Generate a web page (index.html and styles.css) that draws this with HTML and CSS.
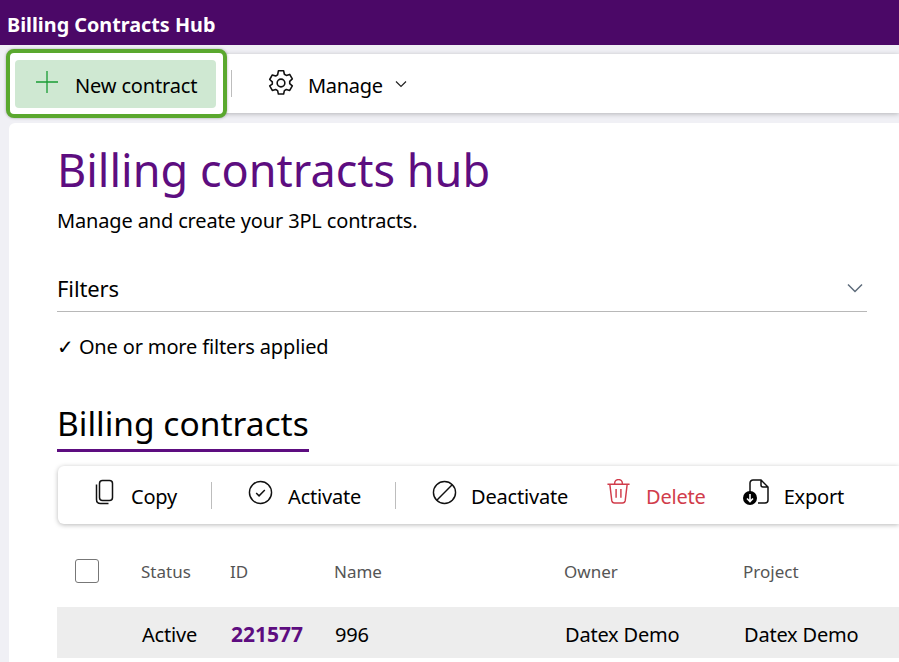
FILE: index.html
```html
<!DOCTYPE html>
<html lang="en">
<head>
<meta charset="utf-8">
<title>Billing Contracts Hub</title>
<link rel="stylesheet" href="styles.css">
</head>
<body>
<header class="topbar">Billing Contracts Hub</header>
<div class="shell">
  <nav class="toolbar">
    <div class="highlight">
      <button class="new-btn">
        <svg class="plus" width="24" height="24" viewBox="0 0 24 24"><path d="M12 1v22M1 12h22" fill="none" stroke="#1a9c34" stroke-width="1.300"/></svg>
        <span>New contract</span>
      </button>
    </div>
    <span class="sep sep-top"></span>
    <div class="manage">
      <svg class="gear" width="26" height="26" viewBox="1.500 1.500 23 23" fill="none" stroke="#111" stroke-width="1.400" stroke-linejoin="round"><path d="M10.700 2.200h4.600l.7 3.100 1.700 1 3-.9 2.300 4-2.300 2.100v2l2.300 2.100-2.300 4-3-.9-1.700 1-.7 3.100h-4.600l-.7-3.100-1.700-1-3 .9-2.300-4L5.300 14v-2L3 9.900l2.300-4 3 .9 1.700-1z"/><circle cx="13" cy="13" r="3.400"/></svg>
      <span>Manage</span>
      <svg class="caret" width="12" height="8" viewBox="0 0 12 8"><path d="M1 1.500l5 5 5-5" fill="none" stroke="#222" stroke-width="1.200"/></svg>
    </div>
  </nav>
  <main class="card">
    <h1>Billing contracts hub</h1>
    <p class="sub">Manage and create your 3PL contracts.</p>
    <div class="filters">
      <span>Filters</span>
      <svg width="16" height="10" viewBox="0 0 16 10"><path d="M1 1.500l7 7 7-7" fill="none" stroke="#5d6b7a" stroke-width="1.500"/></svg>
    </div>
    <p class="applied">✓ One or more filters applied</p>
    <h2><span>Billing contracts</span></h2>
    <div class="actions">
      <div class="act act-copy">
        <svg width="24" height="26" viewBox="0 0 24 26" fill="none" stroke="#111" stroke-width="1.500"><rect x="6.500" y="1.500" width="13" height="20" rx="3"/><path d="M3.500 5.500v15c0 2.500 1.500 4 4 4h8"/></svg>
        <span>Copy</span>
      </div>
      <span class="sep sep-a"></span>
      <div class="act act-activate">
        <svg width="25" height="25" viewBox="0 0 26 26" fill="none" stroke="#111" stroke-width="1.500"><circle cx="13" cy="13" r="11.500"/><path d="M8.500 13.500l3 3 6-6"/></svg>
        <span>Activate</span>
      </div>
      <span class="sep sep-b"></span>
      <div class="act act-deactivate">
        <svg width="25" height="25" viewBox="0 0 26 26" fill="none" stroke="#111" stroke-width="1.500"><circle cx="13" cy="13" r="11.500"/><path d="M5 21L21 5"/></svg>
        <span>Deactivate</span>
      </div>
      <div class="act act-delete">
        <svg width="25" height="26" viewBox="0 0 26 26" fill="none" stroke="#d13c4b" stroke-width="1.500"><path d="M1.500 5h23M9 5V4a4 4 0 0 1 8 0v1M4 5l2 17a3 3 0 0 0 3 2.500h8a3 3 0 0 0 3-2.500l2-17M10.500 10v9M15.500 10v9"/></svg>
        <span>Delete</span>
      </div>
      <div class="act act-export">
        <svg width="26" height="26" viewBox="0 0 26 26"><path d="M7 14V4a3 3 0 0 1 3-3h8l7 7v13a3 3 0 0 1-3 3h-7M18 1v5a2 2 0 0 0 2 2h5" fill="none" stroke="#111" stroke-width="1.500"/><circle cx="7" cy="19" r="7"/><path d="M7 15v7M4 19.500L7 22.500l3-3" fill="none" stroke="#fff" stroke-width="1.600"/></svg>
        <span>Export</span>
      </div>
    </div>
    <div class="row head">
      <span class="c-check"><span class="checkbox"></span></span>
      <span class="c-status">Status</span>
      <span class="c-id">ID</span>
      <span class="c-name">Name</span>
      <span class="c-owner">Owner</span>
      <span class="c-project">Project</span>
    </div>
    <div class="row data">
      <span class="c-check"></span>
      <span class="c-status">Active</span>
      <span class="c-id link">221577</span>
      <span class="c-name">996</span>
      <span class="c-owner">Datex Demo</span>
      <span class="c-project">Datex Demo</span>
    </div>
  </main>
</div>
</body>
</html>
```
FILE: styles.css
```css
* { box-sizing: border-box; }
html, body { margin: 0; height: 100%; }
body {
  overflow: hidden;
  background: #f0f0f5;
  color: #000;
  font-family: "Noto Sans", "Open Sans", "Liberation Sans", sans-serif;
}
.topbar {
  height: 45px;
  padding: 12px 0 0 7px;
  background: #4b0867;
  color: #fff;
  font-size: 19.800px;
  font-weight: 700;
  line-height: 25px;
}
.shell { padding: 9px 0 0 10px; }
.toolbar {
  display: flex;
  align-items: center;
  height: 59px;
  background: #fff;
  border-radius: 4px 0 0 4px;
  box-shadow: 0 1px 5px rgba(0,0,0,.25);
}
.highlight {
  flex: none;
  margin: 0 4px 0 -4px;
  height: 69px;
  width: 221px;
  padding: 7px 7px 6px 5px;
  background: #fff;
  border: 4px solid #5aa82e;
  border-radius: 8px;
  box-shadow: 0 0 3px rgba(0,0,0,.3);
}
.new-btn {
  display: flex;
  align-items: center;
  width: 201px;
  height: 48px;
  padding: 0 0 0 20px;
  border: 0;
  border-radius: 4px;
  background: #cfe8d2;
  color: #000;
  font: inherit;
  font-size: 20px;
  letter-spacing: -0.150px;
}
.plus { position: relative; top: -2px; }
.new-btn span { margin-left: 16px; position: relative; top: 1px; }
.sep {
  flex: none;
  width: 1px;
  height: 27px;
  background: #bdbdbd;
}
.manage {
  display: flex;
  align-items: center;
  margin-left: 36px;
  font-size: 20px;
  letter-spacing: -0.300px;
}
.manage .gear { position: relative; top: -1px; }
.manage span { margin-left: 14px; position: relative; top: 2px; }
.manage .caret { margin-left: 12px; }
.card {
  margin: 10px 0 0 -1px;
  padding: 17px 0 0 48px;
  height: 539px;
  background: #fff;
  border-radius: 6px 0 0 0;
}
h1 {
  margin: 0;
  height: 60px;
  color: #5d0d80;
  font-size: 45px;
  font-weight: 400;
  line-height: 60px;
}
.sub {
  margin: 7px 0 0;
  font-size: 20px;
  line-height: 27px;
  letter-spacing: -0.150px;
}
.filters {
  display: flex;
  align-items: center;
  justify-content: space-between;
  width: 810px;
  height: 43px;
  margin-top: 35px;
  padding: 0 4px 4px 0;
  border-bottom: 1px solid #b8b8b8;
  font-size: 22px;
  letter-spacing: -0.100px;
}
.applied {
  margin: 21px 0 0;
  font-size: 20px;
  line-height: 28px;
  letter-spacing: -0.150px;
}
h2 { margin: 40px 0 0; font-size: 33.500px; font-weight: 400; line-height: 45px; }
h2 span { display: inline-block; height: 51px; border-bottom: 3px solid #5d0d80; }
.actions {
  display: flex;
  align-items: center;
  margin: 14px 0 0 1px;
  height: 58px;
  padding-left: 35px;
  background: #fff;
  border-radius: 6px 0 0 6px;
  box-shadow: 0 1px 5px rgba(0,0,0,.28);
  font-size: 20px;
  letter-spacing: -0.200px;
}
.act { display: flex; align-items: center; flex: none; }
.act span { margin-left: 15px; position: relative; top: 1px; }
.act svg { position: relative; top: -3px; }
.act-copy span { margin-left: 14px; }
.act-deactivate span { margin-left: 14px; }
.sep-a { margin: 0 36px 0 34px; }
.sep-b { margin: 0 36px 0 34px; }
.act-deactivate { margin-right: 38px; }
.act-delete { color: #d13c4b; margin-right: 37px; }
.row {
  display: grid;
  grid-template-columns: 84px 89px 104px 230px 179px 1fr;
  align-items: center;
}
.head {
  height: 83px;
  padding-top: 11px;
  color: #555;
  font-size: 17px;
}
.data {
  height: 51px;
  padding-top: 3px;
  background: #ededed;
  font-size: 20px;
  letter-spacing: -0.200px;
}
.data span { padding-left: 1px; }
.checkbox {
  display: block;
  width: 24px;
  height: 24px;
  margin-left: 18px;
  border: 1px solid #777;
  border-radius: 3px;
}
.link { color: #5d0d80; font-weight: 700; font-size: 21px; letter-spacing: 0; }
```
